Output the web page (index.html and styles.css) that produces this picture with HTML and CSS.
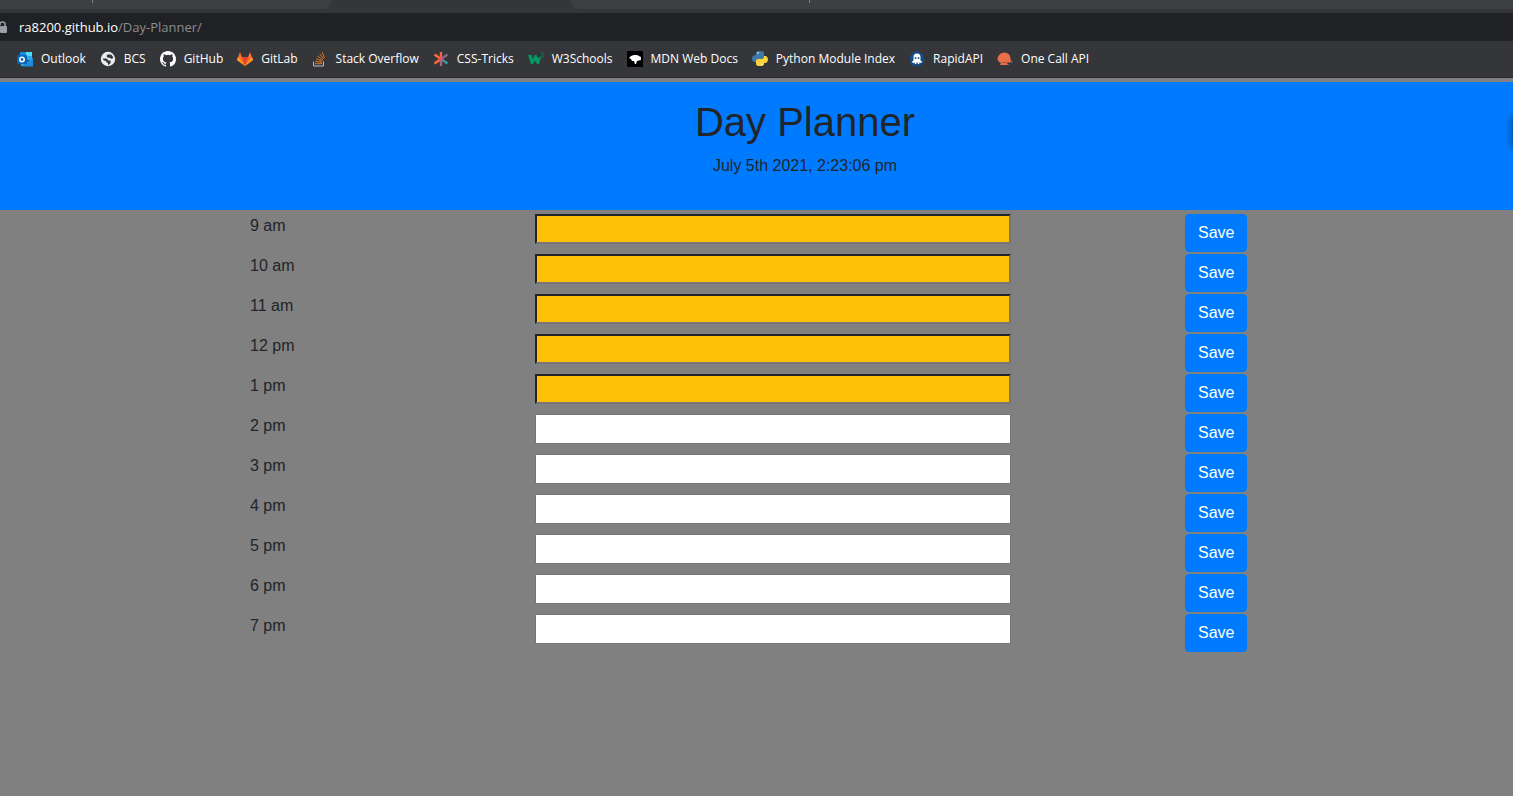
FILE: index.html
```html
<!DOCTYPE html>
<html lang="en">
<head>
<meta charset="utf-8">
<title>Day Planner</title>
<link rel="stylesheet" href="styles.css">
</head>
<body>
<div class="browser">
  <div class="tabs">
    <div class="tab tab-first"><span class="tick"></span></div>
    <div class="tab-active"></div>
    <div class="tab tab-last"><span class="tick"></span></div>
  </div>
  <div class="address">
    <svg class="lock" width="7" height="12" viewBox="0 0 7 12"><path d="M0 4.500V2.800Q0 1 2.500 1T5 2.800V5" fill="none" stroke="#9aa0a6" stroke-width="1.500"/><rect x="0" y="5" width="7" height="7" rx="1" fill="#9aa0a6"/></svg>
    <span class="host">ra8200.github.io<span class="path">/Day-Planner/</span></span>
  </div>
  <nav class="bookmarks">
    <a href="#"><svg width="16" height="16" viewBox="0 0 16 16"><path d="M3 1h12v8H3z" fill="#1490df"/><path d="M9 1h6v4H9z" fill="#50d9ff"/><path d="M9 5h6v4H9z" fill="#28a8ea"/><path d="M3 8l7 3 6-4v8H4z" fill="#28a8ea"/><path d="M5 15.500L16 8v7.500z" fill="#1d8bd8"/><rect y="4" width="10" height="9" rx="1" fill="#0364b8"/><circle cx="5" cy="8.500" r="2.200" fill="none" stroke="#fff" stroke-width="1.500"/></svg>Outlook</a>
    <a href="#"><svg width="16" height="16" viewBox="0 0 16 16"><circle cx="8" cy="8" r="7.200" fill="#eceef0"/><path d="M2.500 7.500h3.500q2 0 2 2h2.500q1 3-2.500 4.500v-2q-2 0-2-2-2.500 0-3.500-2.500z" fill="#35363a"/><path d="M7.500 3.500h3.500q2 1 2.300 3.500l-2 1q-1-1.500-2.800-1.200-1.500-.3-2-1.800z" fill="#35363a"/></svg>BCS</a>
    <a href="#"><svg width="16" height="16" viewBox="0 0 16 16"><path fill="#fff" d="M8 0C3.580 0 0 3.580 0 8c0 3.540 2.290 6.530 5.470 7.590.4.070.55-.17.55-.38v-1.490c-2.010.37-2.690-.49-2.690-.940-.09-.23-.48-.94-.82-1.130-.28-.15-.68-.52-.01-.53.63-.01 1.080.58 1.230.82.72 1.210 1.870.87 2.330.66.07-.52.28-.87.51-1.070-1.780-.2-3.640-.89-3.640-3.950 0-.87.31-1.590.82-2.150-.08-.2-.36-1.020.08-2.120 0 0 .67-.21 2.200.82a7.600 7.600 0 0 1 4 0c1.530-1.040 2.200-.82 2.200-.82.44 1.100.16 1.920.08 2.120.51.56.82 1.270.82 2.150 0 3.070-1.870 3.750-3.650 3.950.29.25.54.73.54 1.480v2.200c0 .21.15.46.55.38A8 8 0 0 0 16 8c0-4.420-3.580-8-8-8z"/></svg>GitHub</a>
    <a href="#"><svg width="16" height="16" viewBox="0 0 16 16"><path d="M8 15L0 9 3 1l2 5h6l2-5 3 8z" fill="#fc6d26"/><path d="M8 15L5 6h6z" fill="#e24329"/><path d="M8 15L0 9l1-3zM8 15l8-6-1-3z" fill="#fca326"/></svg>GitLab</a>
    <a href="#"><svg width="16" height="16" viewBox="0 0 16 16"><path d="M1.500 10.500v4.500h10v-4.500" fill="none" stroke="#bcbbbb"/><path d="M3 12.700h7M3.200 10.400l7 .9M4 7.800l6.500 2.200M5.500 5.200l5.400 3.600M7.500 2.800l4.200 4.900M10.200 1l2.300 5.800" stroke="#e07822"/></svg>Stack Overflow</a>
    <a href="#"><svg width="16" height="16" viewBox="0 0 16 16"><g stroke-width="2.400"><path d="M8 8V1" stroke="#ef6548"/><path d="M8 8L1.500 3.500M8 8l-6.500 4.500" stroke="#ff6a35"/><path d="M8 8v7" stroke="#ac6288"/><path d="M8 8l6.500-4.500" stroke="#806985"/><path d="M8 8l6.500 4.500" stroke="#389aa9"/></g><circle cx="8" cy="8" r="2" fill="#e64e68"/></svg>CSS-Tricks</a>
    <a href="#"><svg width="16" height="16" viewBox="0 0 16 16"><path d="M0 4h3.500l1.500 4 1.500-4h2l2 4 .5-2h2l-2 7H9L7 9.500 5 13H3z" fill="#059862"/><path d="M13 2h2.300L14 4q2 0 1 2h-2" fill="none" stroke="#0b7d56"/></svg>W3Schools</a>
    <a href="#"><svg width="16" height="16" viewBox="0 0 16 16"><path d="M0 0h16v16H0z" fill="#000"/><path d="M2 7l2-2 3-1h3l4 2v3l-4 1-1 3H8l-1-3H5L4 8z" fill="#fff"/></svg>MDN Web Docs</a>
    <a href="#"><svg width="16" height="16" viewBox="0 0 16 16"><path d="M4 4V2q0-2 4-2t4 2v4q0 2-2 2H6q-2 0-2 3H2Q0 10 0 7.500T2.500 4H8" fill="#3e79aa"/><path d="M12 12v1q0 2-4 2t-4-2v-3q0-2 2-2h4q2 0 2-3h2q2 1 2 3.500T13.500 12H8" fill="#ffd43b"/><circle cx="6" cy="2" r=".8" fill="#fff"/><circle cx="10" cy="13.500" r=".8" fill="#fff"/></svg>Python Module Index</a>
    <a href="#"><svg width="16" height="16" viewBox="0 0 16 16"><circle cx="8" cy="8" r="7.500" fill="#174a82"/><path d="M4.500 6q0-3.500 3.500-3.500T11.500 6v3.500l2 1.500-2 1-1.500-.7.500 1.700H9l-1-2-1 2H5.500l.500-1.700-1.500.7-2-1 2-1.500z" fill="#fff"/><circle cx="6.500" cy="7" r=".9" fill="#174a82"/><circle cx="9.500" cy="7" r=".9" fill="#174a82"/></svg>RapidAPI</a>
    <a href="#"><svg width="16" height="16" viewBox="0 0 16 16"><path d="M.500 9q0-4 2.500-6 3-2.500 7-1 3.500 1.500 3.500 6l2 4-1.500-.5-1-1.500v2l-2-1-1 1 2 2H3l1-2-2-1z" fill="#eb6e4b"/><path d="M5 11.500h4l2 2" fill="none" stroke="#914b3d" stroke-width=".8"/></svg>One Call API</a>
  </nav>
</div>
<main class="page">
  <header class="hero">
    <div class="drawer"></div>
    <h1>Day Planner</h1>
    <p>July 5th 2021, 2:23:06 pm</p>
  </header>
  <form class="planner">
    <div class="row"><label for="h9">9 am</label><input id="h9" class="past" type="text"><button type="button">Save</button></div>
    <div class="row"><label for="h10">10 am</label><input id="h10" class="past" type="text"><button type="button">Save</button></div>
    <div class="row"><label for="h11">11 am</label><input id="h11" class="past" type="text"><button type="button">Save</button></div>
    <div class="row"><label for="h12">12 pm</label><input id="h12" class="past" type="text"><button type="button">Save</button></div>
    <div class="row"><label for="h13">1 pm</label><input id="h13" class="past" type="text"><button type="button">Save</button></div>
    <div class="row"><label for="h14">2 pm</label><input id="h14" type="text"><button type="button">Save</button></div>
    <div class="row"><label for="h15">3 pm</label><input id="h15" type="text"><button type="button">Save</button></div>
    <div class="row"><label for="h16">4 pm</label><input id="h16" type="text"><button type="button">Save</button></div>
    <div class="row"><label for="h17">5 pm</label><input id="h17" type="text"><button type="button">Save</button></div>
    <div class="row"><label for="h18">6 pm</label><input id="h18" type="text"><button type="button">Save</button></div>
    <div class="row"><label for="h19">7 pm</label><input id="h19" type="text"><button type="button">Save</button></div>
  </form>
</main>
</body>
</html>
```
FILE: styles.css
```css
* { box-sizing: border-box; }
body {
  margin: 0;
  min-height: 100vh;
  background: #808080;
  color: #212529;
  font: 16px/24px "Liberation Sans", Arial, sans-serif;
}
.browser {
  background: #35363a;
  border-bottom: 1px solid #242528;
  font-family: "Open Sans", "Segoe UI", sans-serif;
}
.tabs { display: flex; height: 13px; padding-bottom: 4px; }
.tab { background: #3c4043; }
.tab-first { width: 331px; padding-left: 92px; border-bottom-right-radius: 8px; }
.tab-active { width: 240px; }
.tab-last { flex: 1; padding-left: 238px; border-bottom-left-radius: 8px; }
.tick { display: block; width: 1px; height: 3px; background: #80868b; }
.address {
  display: flex;
  align-items: center;
  gap: 12px;
  height: 28px;
  background: #202124;
  color: #fff;
  font-size: 13px;
}
.path { color: #8b8d91; }
.bookmarks {
  display: flex;
  align-items: center;
  gap: 14px;
  height: 36px;
  padding-left: 17px;
  overflow: hidden;
}
.bookmarks a {
  display: flex;
  align-items: center;
  gap: 8px;
  color: #fff;
  font-size: 12px;
  line-height: 16px;
  text-decoration: none;
  white-space: nowrap;
}
.bookmarks svg { flex: none; }
.page { padding-top: 4px; }
.hero {
  position: relative;
  padding: 16px 0 32px 97px;
  overflow: hidden;
  background: #007bff;
  text-align: center;
}
.hero h1 { margin: 0 0 8px; font-size: 40px; font-weight: 400; line-height: 48px; }
.hero p { margin: 0; }
.drawer {
  position: absolute;
  top: 34px;
  right: -8px;
  width: 8px;
  height: 32px;
  box-shadow: 0 0 8px rgba(0, 0, 0, .6);
}
.planner { max-width: 1237px; margin: 0 auto; padding: 4px 0 0 97px; }
.row {
  display: grid;
  grid-template-columns: 285px 1fr 190px;
  align-items: start;
  padding-left: 15px;
  margin-bottom: 2px;
}
.row input {
  width: 476px;
  max-width: 90%;
  height: 30px;
  padding: 1px 2px;
  border: 1px solid #767676;
  background: #fff;
  font: inherit;
}
.row .past {
  border: 2px solid;
  border-color: #212529 #767676 #767676 #212529;
  background: #ffc107;
}
.row button {
  justify-self: start;
  padding: 6px 12px;
  border: 1px solid #007bff;
  border-radius: 4px;
  background: #007bff;
  color: #fff;
  font: inherit;
}
```
